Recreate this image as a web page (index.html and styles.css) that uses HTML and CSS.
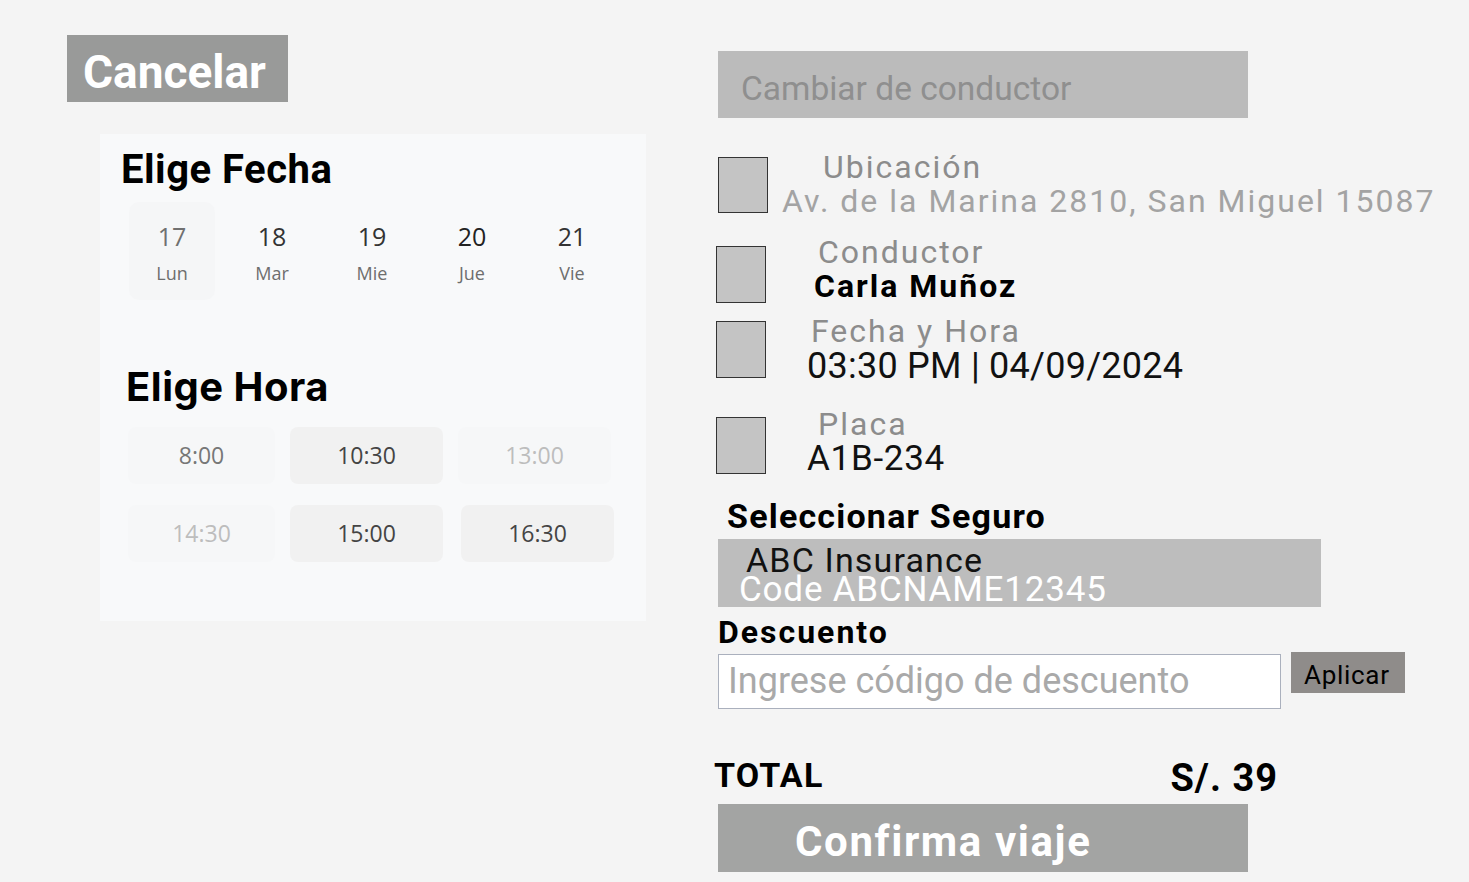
FILE: index.html
```html
<!DOCTYPE html>
<html lang="es">
<head>
<meta charset="utf-8">
<title>Confirmar viaje</title>
<link rel="stylesheet" href="styles.css">
</head>
<body>
<div class="page">
  <div class="left">
    <div class="btn-cancel">Cancelar</div>
    <section class="card">
      <h2 class="card-title">Elige Fecha</h2>
      <div class="dates">
        <div class="date date-first"><span class="date-num num-muted">17</span><span class="date-day">Lun</span></div>
        <div class="date"><span class="date-num">18</span><span class="date-day">Mar</span></div>
        <div class="date"><span class="date-num">19</span><span class="date-day">Mie</span></div>
        <div class="date"><span class="date-num num-dark">20</span><span class="date-day">Jue</span></div>
        <div class="date"><span class="date-num">21</span><span class="date-day">Vie</span></div>
      </div>
      <h2 class="card-title title-hora">Elige Hora</h2>
      <div class="slots">
        <div class="slot slot-light">8:00</div>
        <div class="slot slot-active">10:30</div>
        <div class="slot slot-disabled">13:00</div>
        <div class="slot slot-disabled">14:30</div>
        <div class="slot slot-active">15:00</div>
        <div class="slot slot-active slot-shift">16:30</div>
      </div>
    </section>
  </div>

  <div class="right">
    <div class="btn-change">Cambiar de conductor</div>

    <div class="info info-1">
      <div class="info-icon icon-1"></div>
      <div class="info-text">
        <div class="info-label label-1">Ubicación</div>
        <div class="info-value value-address">Av. de la Marina 2810, San Miguel 15087</div>
      </div>
    </div>

    <div class="info info-2 info-shift">
      <div class="info-icon icon-2"></div>
      <div class="info-text text-wide">
        <div class="info-label label-2">Conductor</div>
        <div class="info-value value-bold">Carla Muñoz</div>
      </div>
    </div>

    <div class="info info-3 info-shift">
      <div class="info-icon icon-3"></div>
      <div class="info-text text-wide">
        <div class="info-label label-3">Fecha y Hora</div>
        <div class="info-value value-big">03:30 PM | 04/09/2024</div>
      </div>
    </div>

    <div class="info info-4 info-shift">
      <div class="info-icon icon-4"></div>
      <div class="info-text text-wide">
        <div class="info-label label-4">Placa</div>
        <div class="info-value value-plate">A1B-234</div>
      </div>
    </div>

    <h3 class="section-title title-seguro">Seleccionar Seguro</h3>
    <div class="insurance">
      <div class="ins-name">ABC Insurance</div>
      <div class="ins-code">Code ABCNAME12345</div>
    </div>

    <h3 class="section-title title-desc">Descuento</h3>
    <div class="discount">
      <input class="discount-input" type="text" placeholder="Ingrese código de descuento">
      <div class="btn-apply">Aplicar</div>
    </div>

    <div class="total">
      <span class="total-label">TOTAL</span>
      <span class="total-value">S/. 39</span>
    </div>

    <div class="btn-confirm">Confirma viaje</div>
  </div>
</div>
</body>
</html>
```

FILE: styles.css
```css
* { box-sizing: border-box; }

html, body {
  margin: 0;
  padding: 0;
  background: #f4f4f4;
}

body {
  font-family: Roboto, "Liberation Sans", sans-serif;
  color: #000;
}

.page {
  display: flex;
  width: 1469px;
  height: 882px;
  padding-left: 67px;
}

/* ---------- Left column ---------- */
.left {
  width: 651px;
  flex: none;
  padding-top: 35px;
}

.btn-cancel {
  width: 221px;
  height: 67px;
  background: #999a99;
  color: #ffffff;
  font-weight: 700;
  font-size: 46px;
  line-height: 60px;
  padding: 7px 0 0 16px;
}

.card {
  margin: 32px 0 0 33px;
  width: 546px;
  background: #f8f9fa;
  padding: 16px 0 59px 21px;
}

.card-title {
  margin: 0;
  font-family: Roboto, "Liberation Sans", sans-serif;
  font-weight: 700;
  font-size: 40px;
  line-height: 40px;
  letter-spacing: 0.5px;
  color: #000;
}

.title-hora {
  font-family: Inter, Roboto, sans-serif;
  margin: 67px 0 0 5px;
}

.dates {
  display: flex;
  gap: 14px;
  margin: 12px 0 0 8px;
}

.date {
  width: 86px;
  height: 98px;
  border-radius: 10px;
  display: flex;
  flex-direction: column;
  align-items: center;
  padding-top: 19px;
  font-family: "Open Sans", "Noto Sans", sans-serif;
  background: #f8f9fa;
}

.date-first {
  background: #f5f6f7;
}

.date-num {
  font-size: 25px;
  line-height: 30px;
  color: #333333;
}

.num-muted { color: #707070; }
.num-dark { color: #222222; }

.date-day {
  margin-top: 10px;
  font-size: 18px;
  line-height: 24px;
  color: #6e6e6e;
}

.slots {
  display: grid;
  grid-template-columns: 147px 153px 153px;
  grid-auto-rows: 57px;
  column-gap: 15px;
  row-gap: 21px;
  margin: 20px 0 0 7px;
}

.slot {
  border-radius: 8px;
  display: flex;
  align-items: center;
  justify-content: center;
  font-family: "Open Sans", "Noto Sans", sans-serif;
  font-size: 23px;
  line-height: 57px;
}

.slot-shift {
  margin-left: 3px;
  margin-right: -3px;
}

.slot-light {
  background: #f6f7f8;
  color: #777777;
}

.slot-active {
  background: #f1f1f1;
  color: #444444;
}

.slot-disabled {
  background: #f6f7f8;
  color: #bdbdbd;
}

/* ---------- Right column ---------- */
.right {
  flex: 1;
  padding-top: 51px;
}

.btn-change {
  width: 530px;
  height: 67px;
  background: #bbbbbb;
  color: #8f8f8f;
  font-size: 33.5px;
  line-height: 58px;
  padding: 9px 0 0 23px;
}

.info {
  display: flex;
  align-items: flex-start;
}

.info-shift { margin-left: -2px; }

.info-1 { margin-top: 32px; }
.info-2 { margin-top: 16px; }
.info-3 { margin-top: 11px; }
.info-4 { margin-top: 23px; }

.info-icon {
  width: 50px;
  height: 57px;
  flex: none;
  background: #c4c4c4;
  border: 1.5px solid #333333;
}

.icon-1 { margin-top: 7px; height: 56px; }
.icon-2 { margin-top: 11px; }
.icon-3 { margin-top: 7px; }
.icon-4 { margin-top: 10px; }

.info-text {
  margin-left: 14px;
  white-space: nowrap;
}

.text-wide { margin-left: 41px; }

.info-label {
  font-size: 32px;
  line-height: 34px;
  letter-spacing: 2px;
  color: #8c8c8c;
}

.label-1 { padding-left: 41px; }
.label-2 { padding-left: 11px; }
.label-3 { padding-left: 4px; }
.label-4 { padding-left: 11px; }

.info-value {
  color: #111111;
}

.value-address {
  font-size: 32px;
  line-height: 35px;
  letter-spacing: 2px;
  color: #a3a3a3;
}

.value-bold {
  font-weight: 700;
  font-size: 32px;
  line-height: 34px;
  letter-spacing: 2px;
  padding-left: 7px;
  color: #000;
}

.value-big {
  font-size: 36px;
  line-height: 36px;
  letter-spacing: 0.25px;
}

.value-plate {
  font-size: 35px;
  line-height: 36px;
  letter-spacing: 0.7px;
}

.section-title {
  margin: 0;
  font-weight: 700;
  color: #000;
}

.title-seguro {
  margin: 21px 0 0 9px;
  font-size: 34px;
  line-height: 36px;
  letter-spacing: 1.2px;
}

.insurance {
  margin-top: 5px;
  width: 603px;
  height: 68px;
  background: #bdbdbd;
  padding-top: 6px;
}

.ins-name {
  font-size: 34px;
  line-height: 30px;
  letter-spacing: 1.15px;
  color: #111111;
  padding-left: 28px;
}

.ins-code {
  font-size: 35px;
  line-height: 30px;
  letter-spacing: 0.8px;
  color: #ffffff;
  padding-left: 21px;
}

.title-desc {
  margin-top: 8px;
  font-size: 32px;
  line-height: 34px;
  letter-spacing: 2px;
}

.discount {
  display: flex;
  align-items: flex-start;
  margin-top: 5px;
}

.discount-input {
  width: 563px;
  height: 55px;
  margin: 0;
  border: 1.5px solid #aab0bd;
  background: #ffffff;
  padding: 0 0 0 9px;
  font-family: Roboto, "Liberation Sans", sans-serif;
  font-size: 36px;
  line-height: 55px;
  color: #333;
  outline: none;
  border-radius: 0;
}

.discount-input::placeholder {
  color: #a9a9a9;
  opacity: 1;
}

.btn-apply {
  margin: -2px 0 0 10px;
  width: 114px;
  height: 41px;
  background: #8f8c8a;
  color: #000;
  font-size: 26px;
  line-height: 35px;
  letter-spacing: 0.7px;
  padding: 6px 0 0 13px;
}

.total {
  display: flex;
  justify-content: space-between;
  align-items: flex-start;
  width: 564px;
  margin: 46px 0 0 -4px;
  font-weight: 700;
}

.total-label {
  font-size: 34px;
  line-height: 40px;
  letter-spacing: 1.2px;
}

.total-value {
  font-size: 38px;
  line-height: 40px;
  letter-spacing: 1px;
  padding-top: 3px;
}

.btn-confirm {
  margin-top: 6px;
  width: 530px;
  height: 68px;
  background: #a3a4a3;
  color: #ffffff;
  font-weight: 700;
  font-size: 42px;
  line-height: 60px;
  letter-spacing: 1.6px;
  padding: 8px 0 0 77px;
}
```
